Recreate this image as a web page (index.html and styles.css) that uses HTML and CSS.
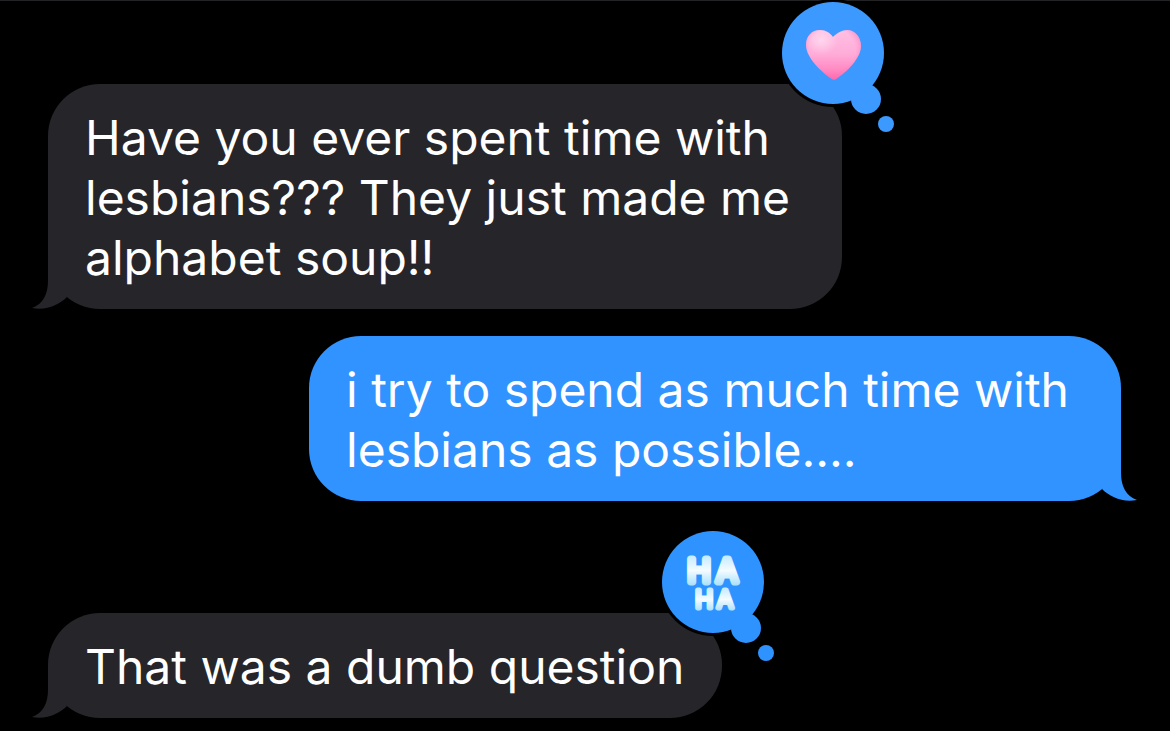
FILE: index.html
```
<!DOCTYPE html>
<html lang="en">
<head>
    <meta charset="UTF-8">
    <meta name="viewport" content="width=device-width, initial-scale=1.0">
    <title>Messages</title>
    <link rel="stylesheet" href="styles.css">
</head>
<body>
    <main class="chat">
        <div class="message received long">
            <p>Have you ever spent time with<br>lesbians??? They just made me<br>alphabet soup!!</p>
            <svg class="tail" viewBox="0 0 36 54" aria-hidden="true">
                <path d="M16 0V26C16 39 11 49 0 53C14 56 27 50 35 42Z"/>
            </svg>
            <svg class="tapback tapback-heart" viewBox="-54 -54 118 134" role="img" aria-label="Heart">
                <defs>
                    <linearGradient id="heart" x1="0" y1="0" x2="0" y2="1">
                        <stop offset="0" stop-color="#ffc0e3"/>
                        <stop offset="0.5" stop-color="#ffabd8"/>
                        <stop offset="1" stop-color="#ff74b5"/>
                    </linearGradient>
                    <radialGradient id="heart-shine" cx="0.28" cy="0.2" r="0.3">
                        <stop offset="0" stop-color="#ffd6ee"/>
                        <stop offset="1" stop-color="#ffd6ee" stop-opacity="0"/>
                    </radialGradient>
                    <radialGradient id="heart-edge" cx="0.48" cy="0.4" r="0.6">
                        <stop offset="0.7" stop-color="#ff70b6" stop-opacity="0"/>
                        <stop offset="1" stop-color="#ff62ab" stop-opacity="0.6"/>
                    </radialGradient>
                </defs>
                <circle class="ring" r="54"/>
                <circle r="51"/>
                <circle cx="33" cy="46" r="15"/>
                <circle cx="53" cy="71" r="8"/>
                <path fill="url(#heart)" d="M0 -16C4 -20 9 -23 14 -23C22 -23 28 -16 28 -7C28 5 14 19 3 26Q1 27 -1 26C-13 18 -27 4 -27 -8C-27 -17 -21 -23 -13 -23C-7 -23 -3 -20 0 -16Z"/>
                <path fill="url(#heart-edge)" d="M0 -16C4 -20 9 -23 14 -23C22 -23 28 -16 28 -7C28 5 14 19 3 26Q1 27 -1 26C-13 18 -27 4 -27 -8C-27 -17 -21 -23 -13 -23C-7 -23 -3 -20 0 -16Z"/>
                <path fill="url(#heart-shine)" d="M0 -16C4 -20 9 -23 14 -23C22 -23 28 -16 28 -7C28 5 14 19 3 26Q1 27 -1 26C-13 18 -27 4 -27 -8C-27 -17 -21 -23 -13 -23C-7 -23 -3 -20 0 -16Z"/>
            </svg>
        </div>

        <div class="message sent long">
            <p>i try to spend as much time with<br>lesbians as possible....</p>
            <svg class="tail" viewBox="0 0 36 54" aria-hidden="true">
                <path d="M20 0V26C20 39 25 49 36 53C22 56 9 50 1 42Z"/>
            </svg>
        </div>

        <div class="message received">
            <p>That was a dumb question</p>
            <svg class="tail" viewBox="0 0 36 54" aria-hidden="true">
                <path d="M16 0V26C16 39 11 49 0 53C14 56 27 50 35 42Z"/>
            </svg>
            <svg class="tapback" viewBox="-54 -54 118 134" role="img" aria-label="Haha">
                <defs>
                    <linearGradient id="haha" x1="0" y1="0" x2="0" y2="1">
                        <stop offset="0.1" stop-color="#c4ebff"/>
                        <stop offset="0.5" stop-color="#f4fcff"/>
                        <stop offset="0.9" stop-color="#a9e0fb"/>
                    </linearGradient>
                </defs>
                <circle class="ring" r="54"/>
                <circle r="51"/>
                <circle cx="33" cy="46" r="15"/>
                <circle cx="53" cy="71" r="8"/>
                <g class="haha" text-anchor="middle">
                    <text class="haha-big" x="-14 14" y="0">HA</text>
                    <text class="haha-small" x="-9 12" y="26">HA</text>
                </g>
            </svg>
        </div>
    </main>
</body>
</html>
```
FILE: styles.css
```
* {
    box-sizing: border-box;
}

body {
    margin: 0;
    background-color: #000;
    color: #fff;
    font-family: Inter, "Liberation Sans", sans-serif;
}

.chat {
    display: flex;
    flex-direction: column;
    min-height: 100vh;
    padding: 83px 49px 13px 48px;
    border-top: 1px solid #232325;
}

.message {
    position: relative;
    width: fit-content;
    padding: 24px 38px 21px 37px;
    border-radius: 52px;
    font-size: 48px;
    line-height: 60px;
}

.message p {
    margin: 0;
}

.received {
    background-color: #26252a;
    fill: #26252a;
}

.sent {
    align-self: flex-end;
    margin: 27px 0 112px;
    background-color: #3093ff;
    fill: #3093ff;
}

.long {
    padding-right: 52px;
}

/* little hook at the bottom corner of each bubble */
.tail {
    position: absolute;
    bottom: 0;
    width: 36px;
    height: 54px;
}

.received .tail {
    left: -16px;
}

.sent .tail {
    right: -16px;
}

/* reactions */
.tapback {
    position: absolute;
    top: -85px;
    right: -55px;
    width: 118px;
    height: 134px;
    fill: #2e93ff;
}

.tapback-heart {
    fill: #3c99ff;
}

.ring {
    fill: #000;
}

.haha {
    fill: url(#haha);
    stroke: url(#haha);
    stroke-linejoin: round;
    font-weight: 300;
}

.haha-big {
    font-size: 31px;
    stroke-width: 7px;
}

.haha-small {
    font-size: 24px;
    stroke-width: 5px;
}
```
